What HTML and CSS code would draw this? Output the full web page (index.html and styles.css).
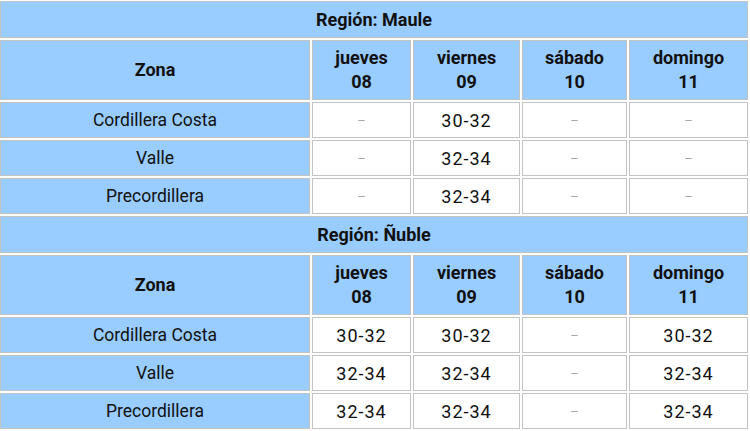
FILE: index.html
```html
<!DOCTYPE html>
<html lang="es">
<head>
<meta charset="utf-8">
<link rel="stylesheet" href="styles.css">
</head>
<body>
<table class="pronostico">
  <colgroup>
    <col class="c-zona"><col class="c-jue"><col class="c-vie"><col class="c-sab"><col class="c-dom">
  </colgroup>
  <tbody>
    <tr class="region"><th colspan="5">Región: Maule</th></tr>
    <tr class="head"><th>Zona</th><th>jueves<br>08</th><th>viernes<br>09</th><th>sábado<br>10</th><th>domingo<br>11</th></tr>
    <tr class="row"><td class="zona">Cordillera Costa</td><td class="nd">–</td><td>30-32</td><td class="nd">–</td><td class="nd">–</td></tr>
    <tr class="row"><td class="zona">Valle</td><td class="nd">–</td><td>32-34</td><td class="nd">–</td><td class="nd">–</td></tr>
    <tr class="row"><td class="zona">Precordillera</td><td class="nd">–</td><td>32-34</td><td class="nd">–</td><td class="nd">–</td></tr>
    <tr class="region"><th colspan="5">Región: Ñuble</th></tr>
    <tr class="head"><th>Zona</th><th>jueves<br>08</th><th>viernes<br>09</th><th>sábado<br>10</th><th>domingo<br>11</th></tr>
    <tr class="row"><td class="zona">Cordillera Costa</td><td>30-32</td><td>30-32</td><td class="nd">–</td><td>30-32</td></tr>
    <tr class="row"><td class="zona">Valle</td><td>32-34</td><td>32-34</td><td class="nd">–</td><td>32-34</td></tr>
    <tr class="row"><td class="zona">Precordillera</td><td>32-34</td><td>32-34</td><td class="nd">–</td><td>32-34</td></tr>
  </tbody>
</table>
</body>
</html>
```
FILE: styles.css
```css
html, body {
  margin: 0;
  padding: 0;
  overflow: hidden;
  background: #ffffff;
}
body {
  font-family: Roboto, "Noto Sans", sans-serif;
  color: #111111;
}
.pronostico {
  border-collapse: separate;
  border-spacing: 2px;
  table-layout: fixed;
  width: 752px;
  margin: -1px 0 0 -2px;
}
.c-zona { width: 310px; }
.c-jue { width: 99px; }
.c-vie { width: 107px; }
.c-sab { width: 105px; }
.c-dom { width: 119px; }
.pronostico th,
.pronostico td {
  border: 1px solid #c3c3c3;
  padding: 0;
  text-align: center;
  vertical-align: middle;
  box-sizing: border-box;
}
.pronostico th {
  background: #99ccff;
  font-weight: 700;
  font-size: 18px;
}
.region th {
  height: 37px;
}
.head th {
  height: 60px;
  line-height: 24px;
}
.row td {
  height: 36px;
  background: #ffffff;
  font-size: 18px;
  letter-spacing: 1px;
}
.row td.zona {
  background: #99ccff;
  font-size: 17.5px;
  letter-spacing: 0;
}
.row td.nd {
  color: #a8a8a8;
  font-size: 13px;
  letter-spacing: 0;
}
```
